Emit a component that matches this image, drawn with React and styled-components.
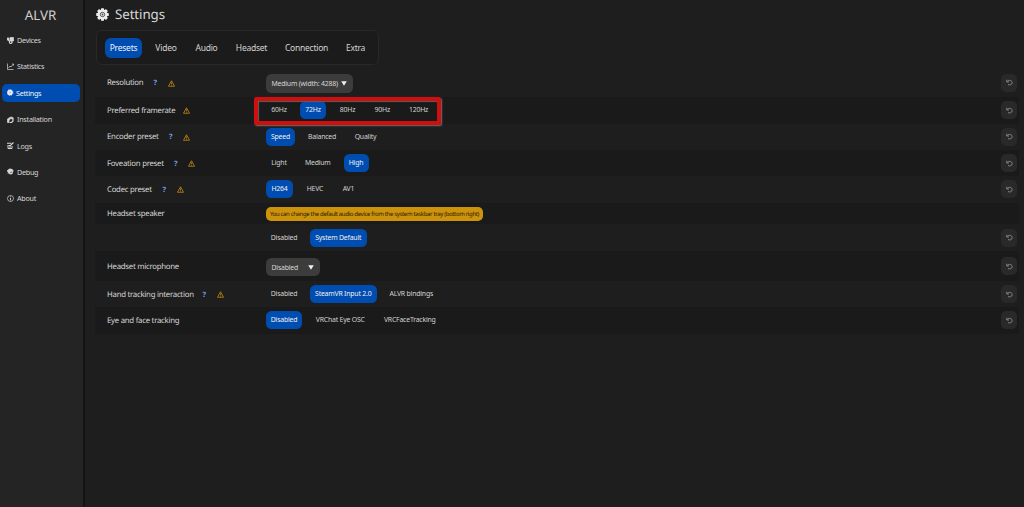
import React, { useState } from 'react';
import styled, { createGlobalStyle } from 'styled-components';

const GlobalStyle = createGlobalStyle`
  * {
    box-sizing: border-box;
  }
  body {
    margin: 0;
    background: #1e1e1e;
    color: #d6d6d6;
    font-family: 'Noto Sans', 'Open Sans', sans-serif;
    text-rendering: geometricPrecision;
    overflow: hidden;
  }
  button {
    font: inherit;
    border: 0;
    padding: 0;
    cursor: pointer;
  }
`;

const Page = styled.div`
  display: flex;
  width: 1024px;
  height: 507px;
`;

const Sidebar = styled.nav`
  width: 85px;
  flex: none;
  padding: 5px 4px 0 2px;
  background: #242424;
  border-right: 2px solid #131313;
`;

const Brand = styled.div`
  height: 26px;
  line-height: 20px;
  text-align: center;
  font-size: 13.4px;
  letter-spacing: -0.1px;
  color: #cfcfcf;
`;

const NavItem = styled.button`
  display: flex;
  align-items: center;
  width: 78px;
  height: 18px;
  margin-bottom: 8.4px;
  padding-left: 5px;
  gap: ${p => (p.$active ? '2px' : '3px')};
  border-radius: 5px;
  background: ${p => (p.$active ? '#004db2' : 'transparent')};
  color: ${p => (p.$active ? '#f2f2f2' : '#d6d6d6')};
  font-size: 7.2px;
  line-height: 18px;
  letter-spacing: -0.26px;
  white-space: nowrap;
`;

const NavIcon = styled.svg`
  width: 7px;
  height: 7px;
  flex: none;
  fill: none;
  stroke: currentColor;
  stroke-width: 1.4;
`;

const Main = styled.main`
  flex: 1;
  padding: 5px 5px 0 10px;
`;

const Title = styled.h1`
  display: flex;
  align-items: center;
  gap: 6px;
  height: 20px;
  margin: 0;
  padding-left: 1px;
  font-size: 13.3px;
  font-weight: 400;
  line-height: 19px;
  letter-spacing: -0.08px;
  color: #d8d8d8;

  span {
    margin-top: -1px;
  }

  svg {
    margin-top: -2px;
  }
`;

const TabBar = styled.div`
  display: flex;
  align-items: center;
  gap: 8px;
  width: 283px;
  height: 35px;
  margin: 5px 0 5px 1px;
  padding-left: 8px;
  border: 1px solid #282828;
  border-radius: 6px;
  background: #1b1b1b;
`;

const Tab = styled.button`
  width: ${p => p.$w}px;
  height: 20px;
  border-radius: 6px;
  background: ${p => (p.$active ? '#004db2' : 'transparent')};
  color: ${p => (p.$active ? '#f4f4f4' : '#d4d4d4')};
  font-size: 8.5px;
  letter-spacing: -0.24px;
  line-height: 20px;
  white-space: nowrap;
`;

const Row = styled.div`
  display: flex;
  align-items: center;
  height: ${p => p.$h}px;
  padding: 0 2px ${p => p.$pb || 0}px 12px;
  background: ${p => (p.$dark ? '#1a1a1a' : '#1e1e1e')};
`;

const Label = styled.div`
  display: flex;
  align-items: center;
  width: 159px;
  height: 12px;
  margin-top: 1px;
  flex: none;
  font-size: 7.8px;
  line-height: 12px;
  letter-spacing: -0.26px;
  white-space: nowrap;
`;

const LabelText = styled.span`
  width: ${p => p.$w}px;
`;

const Help = styled.span`
  width: 5px;
  margin-right: 9px;
  font-size: 7.4px;
  font-weight: 700;
  color: #75a0e8;
`;

const Options = styled.div`
  display: flex;
  flex: 1;
  gap: 8px;
`;

const Option = styled.button`
  width: ${p => p.$w}px;
  height: 18px;
  border-radius: 5.5px;
  background: ${p => (p.$active ? '#004db2' : 'transparent')};
  color: ${p => (p.$active ? '#f0f0f0' : '#d2d2d2')};
  font-size: 6.9px;
  letter-spacing: -0.2px;
  line-height: 18.6px;
  white-space: nowrap;
`;

const Highlight = styled.div`
  position: absolute;
  left: 254px;
  top: 97px;
  width: 187px;
  height: 28px;
  border: 4px solid #cf0f0e;
  border-radius: 2px;
  box-shadow: inset 1px 1px 1px #606060, 1px 1px 1.5px #707070;
`;

const Select = styled.button`
  display: flex;
  align-items: center;
  justify-content: space-between;
  width: ${p => p.$w}px;
  height: 18.5px;
  margin-top: 2px;
  padding: 0 6px 0 5.5px;
  border-radius: 5.5px;
  background: #3c3c3c;
  color: #d6d6d6;
  font-size: 6.9px;
  letter-spacing: -0.2px;
  white-space: nowrap;
`;

const Notice = styled.div`
  width: 217px;
  height: 14px;
  border-radius: 5px;
  background: #cd930d;
  color: #241a02;
  font-size: 6px;
  line-height: 14px;
  letter-spacing: -0.34px;
  text-align: center;
  white-space: nowrap;
`;

const Reset = styled.button`
  display: flex;
  align-items: center;
  justify-content: center;
  width: 16px;
  height: 18px;
  border-radius: 5px;
  background: #292929;
  color: #8c8c8c;
`;

const NAV = [
  { name: 'Devices', icon: 'devices' },
  { name: 'Statistics', icon: 'stats' },
  { name: 'Settings', icon: 'settings' },
  { name: 'Installation', icon: 'install' },
  { name: 'Logs', icon: 'logs' },
  { name: 'Debug', icon: 'debug' },
  { name: 'About', icon: 'about' },
];

const TABS = [
  ['Presets', 37],
  ['Video', 32],
  ['Audio', 33],
  ['Headset', 41],
  ['Connection', 53],
  ['Extra', 29],
];

// w = label column before the help / warning marks
const ROWS = [
  { label: 'Resolution', w: 46.5, h: 27, pb: 2, help: true, warn: true, select: 'Medium (width: 4288)', sw: 87 },
  {
    label: 'Preferred framerate', w: 76, h: 26.5, warn: true, pick: 1,
    options: [['60Hz', 26], ['72Hz', 26], ['80Hz', 27], ['90Hz', 26.5], ['120Hz', 30]],
  },
  { label: 'Encoder preset', w: 62, h: 26.5, help: true, warn: true, pick: 0, options: [['Speed', 29], ['Balanced', 38], ['Quality', 33]] },
  { label: 'Foveation preset', w: 67, h: 26, help: true, warn: true, pick: 2, options: [['Light', 26], ['Medium', 35.5], ['High', 25]] },
  { label: 'Codec preset', w: 55.5, h: 27, pb: 1, help: true, warn: true, pick: 0, options: [['H264', 27], ['HEVC', 28], ['AV1', 23]] },
  {
    label: 'Headset speaker', h: 21, noReset: true,
    notice: 'You can change the default audio device from the system taskbar tray (bottom right)',
  },
  { label: '', h: 27, pick: 1, options: [['Disabled', 36], ['System Default', 56.5]] },
  { label: 'Headset microphone', h: 30, select: 'Disabled', sw: 54 },
  {
    label: 'Hand tracking interaction', w: 95.5, h: 26, help: true, warn: true, pick: 1,
    options: [['Disabled', 36], ['SteamVR Input 2.0', 66.5], ['ALVR bindings', 53.5]],
  },
  { label: 'Eye and face tracking', h: 26.5, pick: 0, options: [['Disabled', 36], ['VRChat Eye OSC', 60.5], ['VRCFaceTracking', 62.5]] },
];

const Glyph = ({ kind }) => (
  <NavIcon viewBox="0 0 14 14">
    {kind === 'devices' && (
      <>
        <path d="M0 2h4v4H0zM6 1h7v7H6z" fill="currentColor" />
        <path d="M2 6l3 2v4M10 8v3l-2 2H5" strokeWidth="2.4" />
      </>
    )}
    {kind === 'stats' && <path d="M1 1v12h12M3 10l3-4 2 2 5-6M10 2h3v3" />}
    {kind === 'settings' && (
      <>
        <circle cx="6" cy="7" r="5" fill="currentColor" />
        <circle cx="6" cy="7" r="6" strokeDasharray="2.4 2.3" />
        <circle cx="6" cy="7" r="1.6" stroke="#8fb0df" />
      </>
    )}
    {kind === 'install' && (
      <>
        <path d="M1 6l6-4v4L4 8v5H1z" fill="currentColor" />
        <path d="M8 2l4 2v6l-3 3H5M8 5l4 1" strokeWidth="2.4" />
      </>
    )}
    {kind === 'logs' && (
      <>
        <path d="M2 6v7h8V8M0 2.5h9" strokeWidth="2" />
        <path d="M3 7h4l6-6M4 10h4" strokeWidth="2.2" />
      </>
    )}
    {kind === 'debug' && (
      <>
        <path d="M4 2h5l3 4-2 6H5L1 7z" fill="currentColor" />
        <path d="M0 5h13M2 11l9-9" strokeWidth="1.6" />
        <path d="M6 9l4-1" stroke="#444" />
      </>
    )}
    {kind === 'about' && (
      <>
        <circle cx="7" cy="7" r="6" />
        <path d="M7 6v5M7 3v1.5" strokeWidth="1.8" />
      </>
    )}
  </NavIcon>
);

const Gear = () => (
  <svg width="13" height="13" viewBox="0 0 26 26">
    <g fill="#ececec">
      {[0, 45, 90, 135].map(a => (
        <rect key={a} x="10" y="0.5" width="6" height="25" rx="1" transform={`rotate(${a} 13 13)`} />
      ))}
      <circle cx="13" cy="13" r="10" />
    </g>
    <circle cx="13" cy="13" r="4.4" fill="none" stroke="#333" strokeWidth="1.6" />
    <circle cx="13" cy="13" r="1.8" fill="#555" />
  </svg>
);

const Warning = () => (
  <svg width="7" height="7" viewBox="0 0 14 14" fill="none" stroke="#cf940e" strokeWidth="1.5">
    <path d="M7 1.5L13 12.5H1z" strokeLinejoin="round" />
    <path d="M7 5v3.5M7 9.6v1.6" />
  </svg>
);

const Caret = () => (
  <svg width="6" height="5" viewBox="0 0 6 5">
    <path d="M0.2 0.2h5.6L3 4.8z" fill="#f0f0f0" />
  </svg>
);

const ResetIcon = () => (
  <svg width="7" height="7" viewBox="0 0 14 14" fill="none" stroke="currentColor" strokeWidth="1.8">
    <path d="M1.5 1.5v4.5h4.5M2 5.5C4 3 7 2 9.5 3.2a4.4 4.4 0 0 1 0 8.2C8 12.2 6 12 4 11" />
  </svg>
);

const SettingRow = ({ row, dark }) => {
  const [picked, setPicked] = useState(row.pick);

  return (
    <Row $h={row.h} $dark={dark} $pb={row.pb}>
      <Label>
        <LabelText $w={row.w}>{row.label}</LabelText>
        {row.help && <Help>?</Help>}
        {row.warn && <Warning />}
      </Label>
      <Options>
        {row.notice && <Notice>{row.notice}</Notice>}
        {row.select && (
          <Select $w={row.sw}>
            {row.select}
            <Caret />
          </Select>
        )}
        {row.options &&
          row.options.map(([name, w], i) => (
            <Option key={name} $w={w} $active={picked === i} onClick={() => setPicked(i)}>
              {name}
            </Option>
          ))}
      </Options>
      {!row.noReset && (
        <Reset>
          <ResetIcon />
        </Reset>
      )}
    </Row>
  );
};

const App = () => {
  const [page, setPage] = useState('Settings');
  const [tab, setTab] = useState('Presets');

  return (
    <>
      <GlobalStyle />
      <Page>
        <Sidebar>
          <Brand>ALVR</Brand>
          {NAV.map(item => (
            <NavItem key={item.name} $active={page === item.name} onClick={() => setPage(item.name)}>
              <Glyph kind={item.icon} />
              {item.name}
            </NavItem>
          ))}
        </Sidebar>
        <Main>
          <Title>
            <Gear />
            <span>Settings</span>
          </Title>
          <TabBar>
            {TABS.map(([name, w]) => (
              <Tab key={name} $w={w} $active={tab === name} onClick={() => setTab(name)}>
                {name}
              </Tab>
            ))}
          </TabBar>
          {ROWS.map((row, i) => (
            <SettingRow key={i} row={row} dark={i % 2 === 1} />
          ))}
        </Main>
        <Highlight />
      </Page>
    </>
  );
};

export default App;
